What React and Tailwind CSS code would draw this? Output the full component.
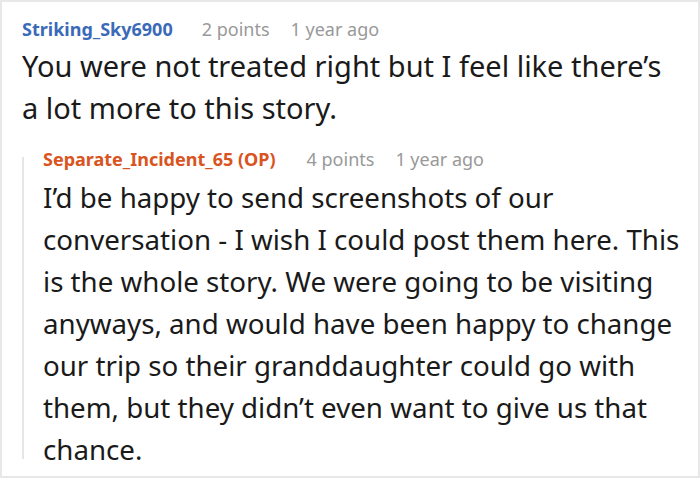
export default function App() {
  return (
    <div className="w-[700px] h-[478px] bg-white border-2 border-[#e8e8e8] overflow-hidden" style={{ fontFamily: '"Noto Sans", sans-serif' }}>
      <div className="pl-[20px] pt-[12px]">
        <div className="flex items-baseline text-[18px] leading-[30px]">
          <span className="font-bold text-[#3a6ab8]">Striking_Sky6900</span>
          <span className="ml-[29px] text-[#999999]">2 points</span>
          <span className="ml-[21px] text-[#999999]">1 year ago</span>
        </div>
        <p className="mt-[1px] w-[660px] text-[29px] leading-[42px] text-[#1a1a1a]">
          You were not treated right but I feel like there’s a lot more to this story.
        </p>
        <div className="mt-[15px] flex w-[676px]">
          <div className="w-[2px] bg-[#e6e6e6] mt-[13px] mb-[11px] shrink-0"></div>
          <div className="pl-[19px] flex-1">
            <div className="flex items-baseline text-[18px] leading-[30px]">
              <span className="font-bold text-[#d9541e]">Separate_Incident_65 (OP)</span>
              <span className="ml-[31px] text-[#999999]">4 points</span>
              <span className="ml-[21px] text-[#999999]">1 year ago</span>
            </div>
            <p className="mt-[2px] text-[27.7px] leading-[42px] text-[#1a1a1a]">
              I’d be happy to send screenshots of our conversation - I wish I could post them here. This is the whole story. We were going to be visiting anyways, and would have been happy to change our trip so their granddaughter could go with them, but they didn’t even want to give us that chance.
            </p>
          </div>
        </div>
      </div>
    </div>
  );
}
